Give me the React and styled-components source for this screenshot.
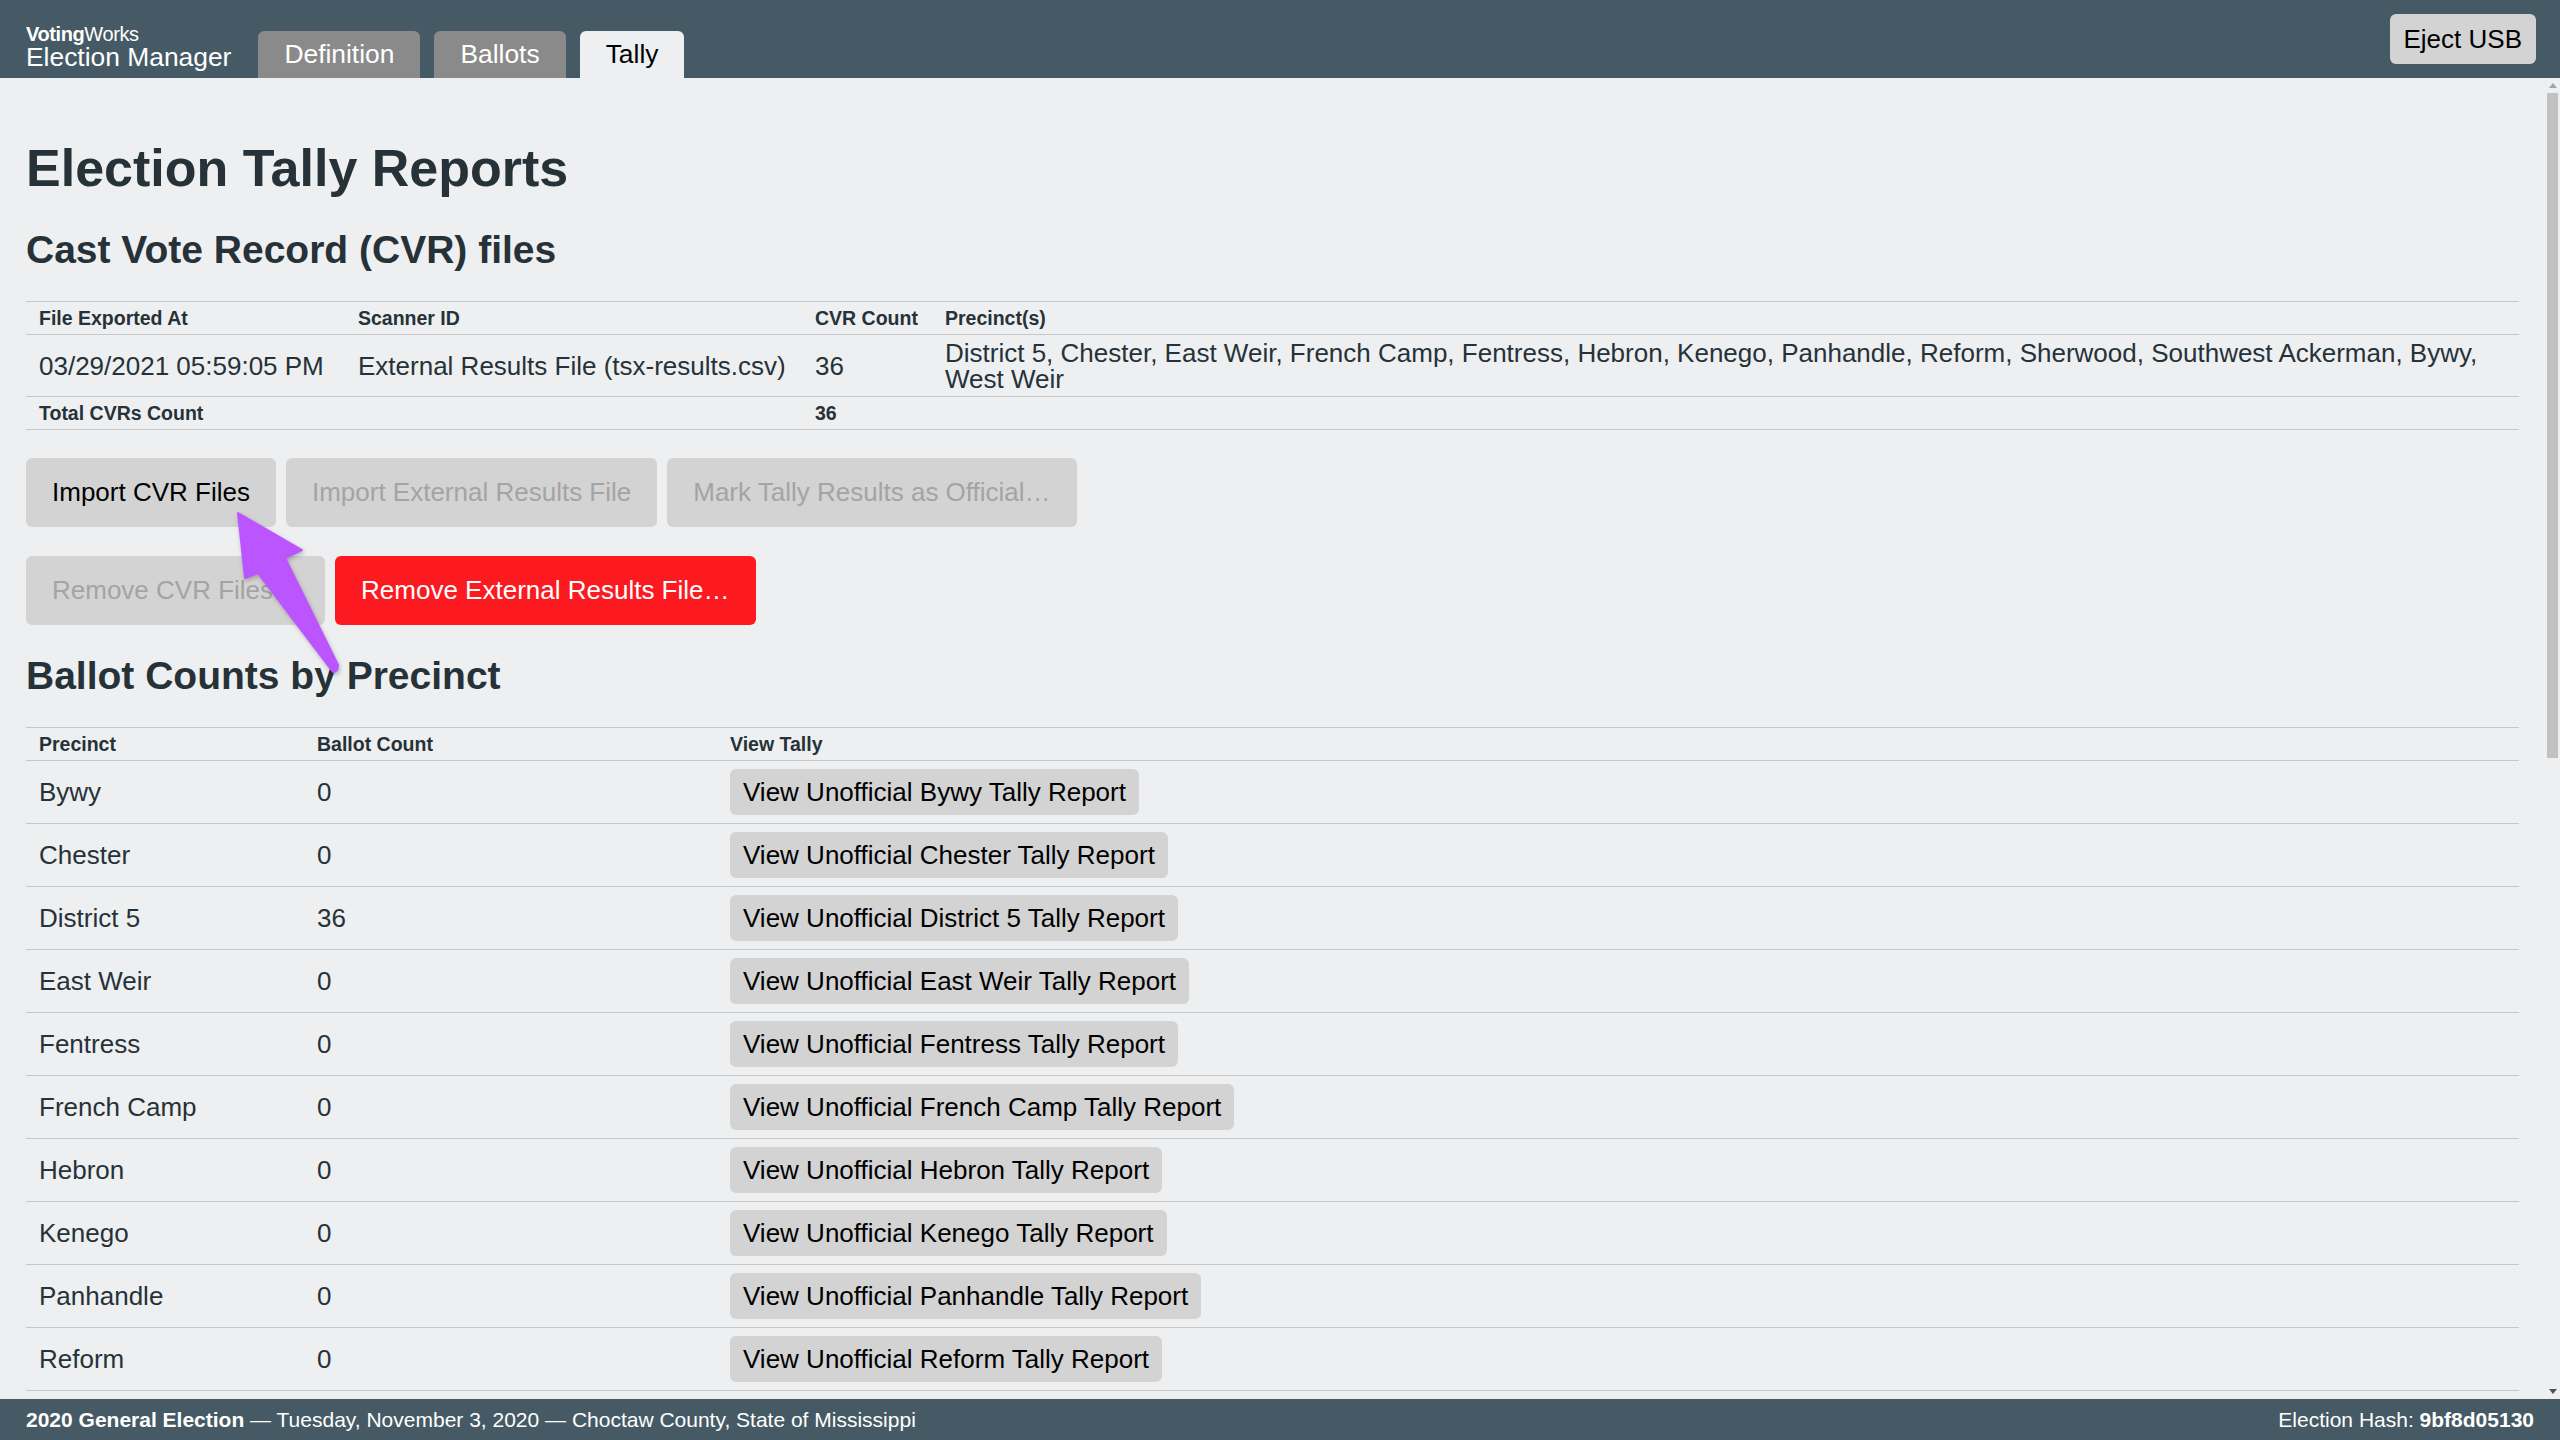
import React from "react";
import styled, { createGlobalStyle } from "styled-components";

const GlobalStyle = createGlobalStyle`
  html, body, #root { height: 100%; margin: 0; }
  * { box-sizing: border-box; }
  body {
    font-family: "Liberation Sans", Arial, Helvetica, sans-serif;
    font-size: 26px;
    color: #263238;
    background: #eeeff1;
  }
`;

const Shell = styled.div`
  position: relative;
  display: flex;
  flex-direction: column;
  height: 100vh;
`;

const Header = styled.header`
  flex: none;
  height: 78px;
  background: #455a64;
  display: flex;
  align-items: flex-end;
  padding: 0 24px 0 26px;
`;

const Brand = styled.div`
  display: flex;
  flex-direction: column;
  color: #ffffff;
  padding-bottom: 8px;
  margin-right: 27px;
`;

const BrandOrg = styled.div`
  font-size: 20px;
  line-height: 19px;
  letter-spacing: -0.4px;
  b { font-weight: 700; }
`;

const BrandApp = styled.div`
  font-size: 26.4px;
  line-height: 26px;
`;

const Tabs = styled.nav`
  display: flex;
  gap: 14px;
`;

const Tab = styled.a`
  display: block;
  height: 47px;
  padding: 0 26px;
  line-height: 47px;
  font-size: 26.4px;
  border-radius: 6px 6px 0 0;
  text-decoration: none;
  background: ${(p) => (p.$active ? "#eeeff1" : "#8a8a8a")};
  color: ${(p) => (p.$active ? "#000000" : "#ffffff")};
`;

const Spacer = styled.div`
  flex: 1;
`;

const EjectButton = styled.button`
  align-self: center;
  height: 50px;
  padding: 0 14px;
  border: none;
  border-radius: 6px;
  background: #d3d3d3;
  color: #000000;
  font-family: inherit;
  font-size: 26px;
  line-height: 50px;
`;

const Body = styled.div`
  flex: 1;
  min-height: 0;
  display: flex;
`;

const Main = styled.main`
  flex: 1;
  min-width: 0;
  overflow-y: auto;
  scrollbar-width: none;
  padding: 26px 26px 26px;
`;

const ScrollRail = styled.div`
  flex: none;
  width: 15px;
  display: flex;
  flex-direction: column;
  background: #eeeff1;
`;

const RailArrow = styled.div`
  flex: none;
  height: 15px;
  display: flex;
  align-items: center;
  justify-content: center;
  &::before {
    content: "";
    width: 0;
    height: 0;
    border-left: 4px solid transparent;
    border-right: 4px solid transparent;
    ${(p) =>
      p.$down
        ? "border-top: 5px solid #505050;"
        : "border-bottom: 5px solid #a3a3a3;"}
  }
`;

const RailTrack = styled.div`
  flex: 1;
  display: flex;
  flex-direction: column;
  padding: 0 2px;
`;

const RailThumb = styled.div`
  height: ${(p) => p.$size};
  background: #c1c1c1;
`;

const Title = styled.h1`
  margin: 33px 0 0;
  font-size: 52px;
  line-height: 62px;
  font-weight: 700;
  color: #263238;
`;

const SectionTitle = styled.h2`
  margin: 27px 0 27px;
  font-size: 39px;
  line-height: 48px;
  font-weight: 700;
  color: #263238;
`;

const Table = styled.table`
  width: 100%;
  border-collapse: collapse;
  border-top: 1px solid #c6c7c8;
`;

const Th = styled.th`
  text-align: left;
  font-size: 19.5px;
  line-height: 24px;
  font-weight: 700;
  padding: 4px 13px;
  border-bottom: 1px solid #c6c7c8;
  white-space: nowrap;
  width: ${(p) => p.$width || "auto"};
`;

const Td = styled.td`
  padding: ${(p) => (p.$button ? "8px 13px" : "4.5px 13px")};
  font-size: 26px;
  line-height: 26px;
  vertical-align: middle;
  border-bottom: 1px solid #c6c7c8;
  white-space: ${(p) => (p.$wrap ? "normal" : "nowrap")};
`;

const TotalCell = styled.td`
  padding: 4px 13px;
  font-size: 19.5px;
  line-height: 24px;
  font-weight: 700;
  border-bottom: 1px solid #c6c7c8;
  white-space: nowrap;
`;

const ButtonRow = styled.div`
  display: flex;
  flex-wrap: wrap;
  gap: 10px;
  margin-top: ${(p) => p.$gap || "29px"};
`;

const ActionButton = styled.button`
  height: 69px;
  padding: 0 26px;
  border: none;
  border-radius: 6px;
  font-family: inherit;
  font-size: 26px;
  line-height: 69px;
  white-space: nowrap;
  background: ${(p) => (p.$danger ? "#fc1920" : "#d3d3d3")};
  color: ${(p) => (p.$danger ? "#ffffff" : "#000000")};
  &:disabled {
    color: #a4a4a4;
  }
`;

const SmallButton = styled.button`
  padding: 10px 13px;
  border: none;
  border-radius: 6px;
  background: #d3d3d3;
  color: #000000;
  font-family: inherit;
  font-size: 26px;
  line-height: 26px;
  white-space: nowrap;
`;

const Footer = styled.footer`
  flex: none;
  height: 41px;
  background: #455a64;
  color: #ffffff;
  font-size: 21px;
  line-height: 41px;
  display: flex;
  align-items: center;
  justify-content: space-between;
  padding: 0 26px;
  white-space: nowrap;
  b { font-weight: 700; }
`;

const Annotation = styled.svg`
  position: absolute;
  left: 230px;
  top: 505px;
  width: 120px;
  height: 180px;
  pointer-events: none;
  filter: drop-shadow(1px 2px 2px rgba(0, 0, 0, 0.25));
`;

const precincts = [
  ["Bywy", 0],
  ["Chester", 0],
  ["District 5", 36],
  ["East Weir", 0],
  ["Fentress", 0],
  ["French Camp", 0],
  ["Hebron", 0],
  ["Kenego", 0],
  ["Panhandle", 0],
  ["Reform", 0],
  ["Sherwood", 0],
  ["Southwest Ackerman", 0],
  ["West Weir", 0],
];

const scanners = [["External Results File", 36], ["Total Ballot Count", 36]];
const methods = [["Absentee", 0], ["Precinct", 0], ["Other", 36]];
const parties = [["Democrat", 0], ["Republican", 0]];

function CountTable({ label, rows, kind }) {
  return (
    <Table>
      <thead>
        <tr>
          <Th $width="278px">{label}</Th>
          <Th $width="413px">Ballot Count</Th>
          <Th>View Tally</Th>
        </tr>
      </thead>
      <tbody>
        {rows.map(([name, count]) => (
          <tr key={name}>
            <Td>{name}</Td>
            <Td>{count}</Td>
            <Td $button>
              <SmallButton>
                View Unofficial {name} {kind}Tally Report
              </SmallButton>
            </Td>
          </tr>
        ))}
      </tbody>
    </Table>
  );
}

export default function App() {
  return (
    <>
      <GlobalStyle />
      <Shell>
        <Header>
          <Brand>
            <BrandOrg>
              <b>Voting</b>Works
            </BrandOrg>
            <BrandApp>Election Manager</BrandApp>
          </Brand>
          <Tabs>
            <Tab>Definition</Tab>
            <Tab>Ballots</Tab>
            <Tab $active>Tally</Tab>
          </Tabs>
          <Spacer />
          <EjectButton>Eject USB</EjectButton>
        </Header>

        <Body>
          <Main>
            <Title>Election Tally Reports</Title>
            <SectionTitle>Cast Vote Record (CVR) files</SectionTitle>
            <Table>
              <thead>
                <tr>
                  <Th $width="319px">File Exported At</Th>
                  <Th $width="457px">Scanner ID</Th>
                  <Th $width="130px">CVR Count</Th>
                  <Th>Precinct(s)</Th>
                </tr>
              </thead>
              <tbody>
                <tr>
                  <Td>03/29/2021 05:59:05 PM</Td>
                  <Td>External Results File (tsx-results.csv)</Td>
                  <Td>36</Td>
                  <Td $wrap>
                    District 5, Chester, East Weir, French Camp, Fentress,
                    Hebron, Kenego, Panhandle, Reform, Sherwood, Southwest
                    Ackerman, Bywy, West Weir
                  </Td>
                </tr>
                <tr>
                  <TotalCell>Total CVRs Count</TotalCell>
                  <TotalCell />
                  <TotalCell>36</TotalCell>
                  <TotalCell />
                </tr>
              </tbody>
            </Table>

            <ButtonRow $gap="28px">
              <ActionButton>Import CVR Files</ActionButton>
              <ActionButton disabled>Import External Results File</ActionButton>
              <ActionButton disabled>Mark Tally Results as Official…</ActionButton>
            </ButtonRow>
            <ButtonRow>
              <ActionButton disabled>Remove CVR Files…</ActionButton>
              <ActionButton $danger>Remove External Results File…</ActionButton>
            </ButtonRow>

            <SectionTitle>Ballot Counts by Precinct</SectionTitle>
            <CountTable label="Precinct" rows={precincts} kind="" />

            <SectionTitle>Ballot Counts by Scanner</SectionTitle>
            <CountTable label="Scanner ID" rows={scanners} kind="Scanner " />

            <SectionTitle>Ballot Counts by Voting Method</SectionTitle>
            <CountTable label="Voting Method" rows={methods} kind="" />

            <SectionTitle>Ballot Counts by Party</SectionTitle>
            <CountTable label="Party" rows={parties} kind="" />

            <SectionTitle>Tally Reports</SectionTitle>
            <ButtonRow>
              <ActionButton>View Unofficial Full Election Tally Report</ActionButton>
              <ActionButton>Save Results File</ActionButton>
            </ButtonRow>
          </Main>
          <ScrollRail aria-hidden="true">
            <RailArrow />
            <RailTrack>
              <RailThumb $size="51.5%" />
            </RailTrack>
            <RailArrow $down />
          </ScrollRail>
        </Body>

        <Footer>
          <div>
            <b>2020 General Election</b> — Tuesday, November 3, 2020 — Choctaw
            County, State of Mississippi
          </div>
          <div>
            Election Hash: <b>9bf8d05130</b>
          </div>
        </Footer>

        <Annotation viewBox="0 0 120 180">
          <path
            d="M8 8 L72 45 L55 53 L108 160 Q108 167 103 167 L28 68 L15 73 Z"
            fill="#bb55ff"
            stroke="#bb55ff"
            strokeWidth="2"
            strokeLinejoin="round"
          />
        </Annotation>
      </Shell>
    </>
  );
}
